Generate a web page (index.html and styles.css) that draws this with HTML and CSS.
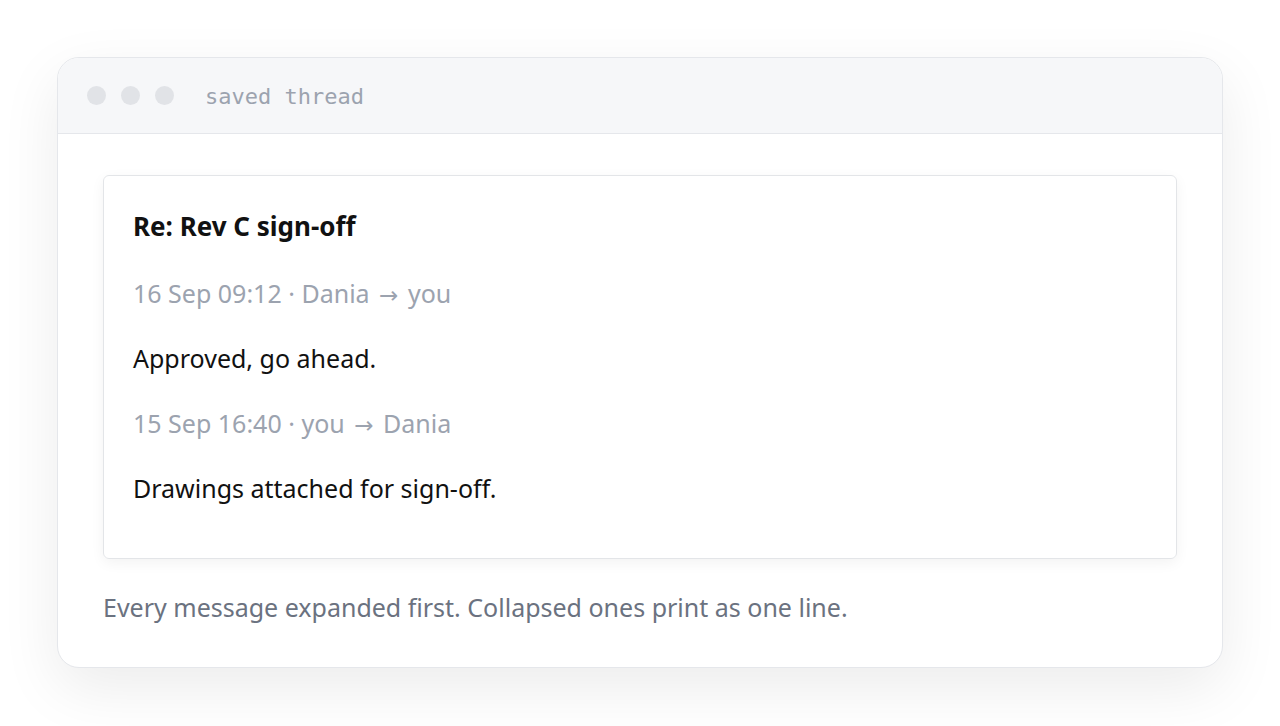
FILE: index.html
```html
<!DOCTYPE html>
<html>
<head>
<meta charset="utf-8">
<link rel="stylesheet" href="styles.css">
</head>
<body>
<div class="window">
  <div class="titlebar">
    <span class="dot"></span><span class="dot"></span><span class="dot"></span>
    <span class="title">saved thread</span>
  </div>
  <div class="content">
    <div class="card">
      <div class="subject">Re: Rev C sign-off</div>
      <div class="meta">16 Sep 09:12 · Dania <span class="arrow">→</span> you</div>
      <div class="body">Approved, go ahead.</div>
      <div class="meta">15 Sep 16:40 · you <span class="arrow">→</span> Dania</div>
      <div class="body">Drawings attached for sign-off.</div>
    </div>
    <p class="note">Every message expanded first. Collapsed ones print as one line.</p>
  </div>
</div>
</body>
</html>
```

FILE: styles.css
```css
html, body { margin: 0; padding: 0; background: #ffffff; }
body {
  font-family: "Noto Sans", "Open Sans", sans-serif;
  padding-top: 57px;
  min-height: 100vh;
  box-sizing: border-box;
}
.window {
  width: 1164px;
  margin: 0 auto;
  border: 1px solid #e5e7eb;
  border-radius: 22px;
  background: #fff;
  overflow: hidden;
  box-shadow: 0 20px 60px rgba(0,0,0,0.08);
}
.titlebar {
  height: 75px;
  background: #f6f7f9;
  border-bottom: 1px solid #e5e7eb;
  display: flex;
  align-items: center;
  padding-left: 29px;
  gap: 15px;
}
.dot {
  width: 19px; height: 19px; border-radius: 50%;
  background: #e1e3e7;
}
.title {
  margin-left: 16px;
  font-family: "DejaVu Sans Mono", monospace;
  font-size: 22px;
  color: #9ca3af;
  position: relative;
  top: 1px;
}
.content {
  padding: 41px 45px 42px;
}
.card {
  border: 1px solid #e3e5e8;
  border-radius: 6px;
  padding: 32px 29px 52px;
  box-shadow: 0 4px 14px rgba(0,0,0,0.05);
  display: flex;
  flex-direction: column;
  gap: 29px;
}
.subject { font-weight: 700; font-size: 26px; color: #111; line-height: 36px; margin-bottom: 2px; }
.meta { font-size: 25px; color: #9ca3af; line-height: 36px; height: 36px; }
.arrow { font-family: "DejaVu Sans", sans-serif; font-size: 23px; line-height: 0; margin: 0 3px; }
.body { font-size: 25px; color: #111; line-height: 36px; }
.note {
  margin: 30px 0 0;
  font-size: 25px;
  color: #6b7280;
  line-height: 36px;
}
```
